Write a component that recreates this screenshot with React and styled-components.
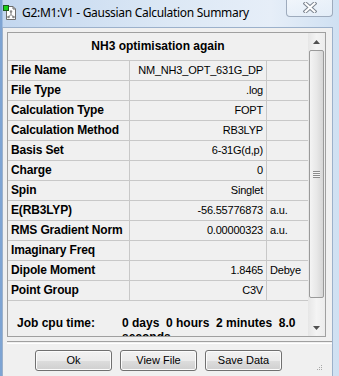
import styled, { createGlobalStyle } from "styled-components";

const GlobalStyle = createGlobalStyle`
  html, body {
    margin: 0;
    padding: 0;
  }
  body {
    width: 339px;
    height: 376px;
    overflow: hidden;
    font-family: "Liberation Sans", Arial, sans-serif;
  }
`;

const rows = [
  { label: "File Name", value: "NM_NH3_OPT_631G_DP" },
  { label: "File Type", value: ".log" },
  { label: "Calculation Type", value: "FOPT" },
  { label: "Calculation Method", value: "RB3LYP" },
  { label: "Basis Set", value: "6-31G(d,p)" },
  { label: "Charge", value: "0" },
  { label: "Spin", value: "Singlet" },
  { label: "E(RB3LYP)", value: "-56.55776873", unit: "a.u." },
  { label: "RMS Gradient Norm", value: "0.00000323", unit: "a.u." },
  { label: "Imaginary Freq", value: "" },
  { label: "Dipole Moment", value: "1.8465", unit: "Debye" },
  { label: "Point Group", value: "C3V" },
];

function AppIcon() {
  return (
    <svg width="13" height="15" viewBox="0 0 13 15">
      <path d="M3.5 1.5 H10 L12.5 4 V14.5 H3.5 Z" fill="#fff" stroke="#6d6d6d" />
      <path d="M10 1.5 V4 H12.5" fill="none" stroke="#6d6d6d" />
      <path d="M8 6.5 V9.5 M8 9.5 L5.5 12 M8 9.5 L10.5 12" stroke="#7a7a7a" strokeWidth="1" />
      <circle cx="8" cy="6.5" r="1.3" fill="#8a8a8a" />
      <circle cx="5.5" cy="12" r="1.3" fill="#8a8a8a" />
      <circle cx="10.5" cy="12" r="1.3" fill="#8a8a8a" />
      <rect x="0.5" y="0.5" width="5" height="5" fill="#19d019" stroke="#1c5a1c" />
    </svg>
  );
}

function CloseGlyph() {
  return (
    <svg width="14" height="11" viewBox="0 0 14 11">
      <path d="M2.5 1.5 L11.5 9.5 M11.5 1.5 L2.5 9.5" stroke="#7d8590" strokeWidth="4" strokeLinecap="square" />
      <path d="M2.5 1.5 L11.5 9.5 M11.5 1.5 L2.5 9.5" stroke="#ffffff" strokeWidth="2" strokeLinecap="square" />
    </svg>
  );
}

function Arrow({ down }) {
  return (
    <svg width="7" height="4" viewBox="0 0 7 4">
      <path d={down ? "M0 0 H7 L3.5 4 Z" : "M0 4 H7 L3.5 0 Z"} fill="#505050" />
    </svg>
  );
}

export default function App() {
  return (
    <Window>
      <GlobalStyle />
      <TitleBar>
        <IconBox>
          <AppIcon />
        </IconBox>
        <Title>G2:M1:V1 - Gaussian Calculation Summary</Title>
        <CloseButton>
          <CloseGlyph />
        </CloseButton>
      </TitleBar>
      <Client>
        <Panel>
          <Content>
            <Header>NH3 optimisation again</Header>
            {rows.map((r) => (
              <Row key={r.label}>
                <Label>{r.label}</Label>
                <Value>{r.value}</Value>
                <Unit>{r.unit}</Unit>
              </Row>
            ))}
            <JobRow>
              <JobLabel>Job cpu time:</JobLabel>
              <JobValue>{"0 days  0 hours  2 minutes  8.0 seconds"}</JobValue>
            </JobRow>
          </Content>
          <Scrollbar>
            <ScrollButton>
              <Arrow />
            </ScrollButton>
            <Track>
              <Thumb>
                <Grip />
              </Thumb>
            </Track>
            <ScrollButton>
              <Arrow down />
            </ScrollButton>
          </Scrollbar>
        </Panel>
        <Separator />
        <ButtonRow>
          <Button>Ok</Button>
          <Button>View File</Button>
          <Button>Save Data</Button>
          <SizeGrip>
            <svg width="7" height="7" viewBox="0 0 7 7">
              <rect x="5" y="1" width="1" height="1" fill="#a8a8a8" />
              <rect x="3" y="3" width="1" height="1" fill="#a8a8a8" />
              <rect x="5" y="3" width="1" height="1" fill="#a8a8a8" />
              <rect x="1" y="5" width="1" height="1" fill="#a8a8a8" />
              <rect x="3" y="5" width="1" height="1" fill="#a8a8a8" />
              <rect x="5" y="5" width="1" height="1" fill="#a8a8a8" />
            </svg>
          </SizeGrip>
        </ButtonRow>
      </Client>
    </Window>
  );
}

const Window = styled.div`
  width: 339px;
  height: 376px;
  display: flex;
  flex-direction: column;
  overflow: hidden;
  background: linear-gradient(90deg, #7ea4d3 0px, #7ea4d3 2px, #c3d7ef 3px, #dce8f5 50%, #e6eef8 80%, #cfe0f2 100%);
`;

const TitleBar = styled.div`
  height: 27px;
  flex-shrink: 0;
  display: flex;
  align-items: center;
  padding: 0 6px 3px 2px;
  box-sizing: border-box;
`;

const IconBox = styled.div`
  width: 15px;
  height: 15px;
  display: flex;
  align-items: center;
  justify-content: center;
`;

const Title = styled.div`
  margin-left: 5px;
  font-family: "Noto Sans", "Open Sans", sans-serif;
  font-size: 12px;
  letter-spacing: -0.3px;
  color: #000;
  white-space: nowrap;
  flex: 1;
`;

const CloseButton = styled.div`
  align-self: flex-start;
  margin-top: -1px;
  width: 47px;
  height: 18px;
  box-sizing: border-box;
  border: 1px solid #9eabbd;
  border-top: none;
  border-radius: 0 0 4px 4px;
  background: linear-gradient(180deg, rgba(255, 255, 255, 0.55), rgba(235, 242, 250, 0.7));
  display: flex;
  align-items: center;
  justify-content: center;
`;

const Client = styled.div`
  flex: 1;
  margin: 0 6px 0 2px;
  border: 1px solid #9cb1cb;
  border-bottom: none;
  background: #f0f0f0;
  padding: 4px 6px 0 4px;
  display: flex;
  flex-direction: column;
`;

const Panel = styled.div`
  height: 305px;
  box-sizing: border-box;
  border: 1px solid #a0a0a0;
  display: flex;
  overflow: hidden;
`;

const Content = styled.div`
  flex: 1;
  overflow: hidden;
  color: #000;
`;

const Header = styled.div`
  height: 27px;
  line-height: 27px;
  border-bottom: 1px solid #c8c8c8;
  text-align: center;
  font-weight: bold;
  font-size: 12px;
`;

const Row = styled.div`
  display: grid;
  grid-template-columns: 122px 137px 1fr;
  height: 20px;
  box-sizing: border-box;
  border-bottom: 1px solid #c8c8c8;
`;

const Label = styled.div`
  border-right: 1px solid #c8c8c8;
  padding-left: 3px;
  font-weight: bold;
  font-size: 12px;
  letter-spacing: -0.15px;
  line-height: 19px;
  white-space: nowrap;
`;

const Value = styled.div`
  border-right: 1px solid #c8c8c8;
  padding-right: 3px;
  text-align: right;
  font-size: 11px;
  letter-spacing: -0.2px;
  line-height: 19px;
  white-space: nowrap;
`;

const Unit = styled.div`
  padding-left: 3px;
  font-size: 11px;
  letter-spacing: -0.2px;
  line-height: 19px;
  white-space: nowrap;
`;

const JobRow = styled.div`
  display: grid;
  grid-template-columns: 114px 1fr;
  padding-top: 15px;
  font-weight: bold;
  font-size: 12px;
  line-height: 14px;
`;

const JobLabel = styled.div`
  padding-left: 9px;
`;

const JobValue = styled.div`
  white-space: pre-wrap;
  padding-right: 4px;
`;

const Scrollbar = styled.div`
  width: 17px;
  flex-shrink: 0;
  display: flex;
  flex-direction: column;
  background: linear-gradient(90deg, #e6e6e6, #f4f4f4 50%, #ececec);
`;

const ScrollButton = styled.div`
  height: 17px;
  flex-shrink: 0;
  display: flex;
  align-items: center;
  justify-content: center;
`;

const Track = styled.div`
  flex: 1;
  padding: 0 1px 0 1px;
`;

const Thumb = styled.div`
  height: 248px;
  box-sizing: border-box;
  border: 1px solid #9a9a9a;
  border-radius: 2px;
  background: linear-gradient(90deg, #f4f4f4, #e8e8e8 50%, #d6d6d6);
  display: flex;
  align-items: center;
  justify-content: center;
`;

const Grip = styled.div`
  width: 7px;
  height: 7px;
  background: repeating-linear-gradient(180deg, #8c8c8c 0px, #8c8c8c 1px, #f6f6f6 1px, #f6f6f6 2px);
`;

const Separator = styled.div`
  margin: 4px -6px 0 0;
  height: 1px;
  border-top: 1px solid #a0a0a0;
  border-bottom: 1px solid #ffffff;
`;

const ButtonRow = styled.div`
  display: flex;
  gap: 8px;
  margin-top: 6px;
  padding-left: 28px;
  align-items: flex-start;
`;

const Button = styled.div`
  width: 77px;
  height: 21px;
  box-sizing: border-box;
  border: 1px solid #707070;
  border-radius: 3px;
  background: linear-gradient(180deg, #f2f2f2 0%, #ebebeb 50%, #dddddd 51%, #cfcfcf 100%);
  box-shadow: inset 0 0 0 1px #fcfcfc;
  font-size: 11px;
  line-height: 19px;
  text-align: center;
  color: #000;
`;

const SizeGrip = styled.div`
  margin-left: auto;
  margin-right: 3px;
  margin-top: 14px;
  width: 7px;
  height: 7px;
  display: flex;
`;
